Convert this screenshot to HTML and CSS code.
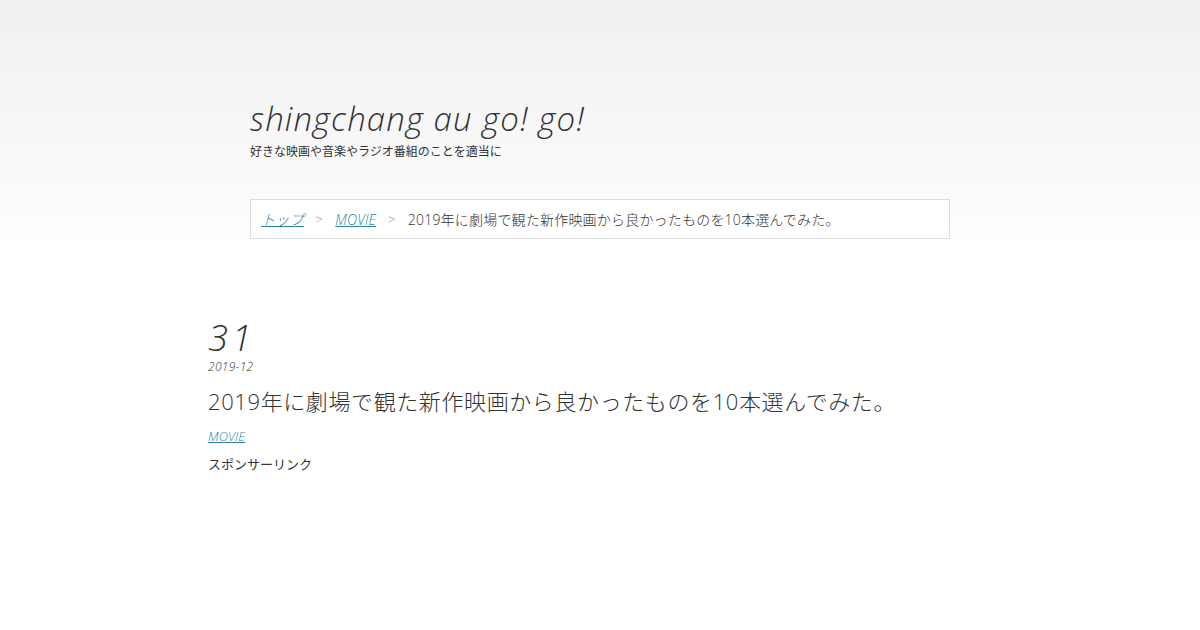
FILE: index.html
```html
<!DOCTYPE html>
<html lang="ja">
<head>
    <meta charset="UTF-8">
    <title>2019年に劇場で観た新作映画から良かったものを10本選んでみた。 - shingchang au go! go!</title>
    <link rel="stylesheet" href="styles.css">
</head>
<body>
    <!-- Site header -->
    <header class="site-header">
        <div class="header-inner">
            <h1 class="site-title">shingchang au go! go!</h1>
            <p class="site-desc">好きな映画や音楽やラジオ番組のことを適当に</p>

            <div class="breadcrumb">
                <a href="#">トップ</a>
                <span class="sep">&gt;</span>
                <a href="#">MOVIE</a>
                <span class="sep">&gt;</span>
                <span>2019年に劇場で観た新作映画から良かったものを10本選んでみた。</span>
            </div>
        </div>
    </header>

    <!-- Entry -->
    <main class="entry">
        <div class="entry-date">
            <div class="day">31</div>
            <div class="month">2019-12</div>
        </div>
        <h2 class="entry-title">2019年に劇場で観た新作映画から良かったものを10本選んでみた。</h2>
        <a class="entry-cat" href="#">MOVIE</a>
        <p class="sponsor">スポンサーリンク</p>
    </main>
</body>
</html>
```

FILE: styles.css
```css
/* Base */
body {
    margin: 0;
    background: #fff;
    color: #333;
    font-family: "Open Sans", "Noto Sans CJK JP", sans-serif;
}

a {
    color: #2d7f9f;
}

/* Header with soft grey fade */
.site-header {
    background: linear-gradient(to bottom, #f0f0f0 0px, #fbfbfb 200px, #ffffff 250px);
    padding-top: 98px;
    height: 172px;
}

.header-inner {
    width: 700px;
    margin: 0 auto;
}

.site-title {
    margin: 0;
    font-size: 33px;
    font-weight: 300;
    font-style: italic;
    color: #333;
    line-height: 42px;
    letter-spacing: 1.1px;
}

.site-desc {
    margin: 4px 0 0;
    font-size: 12px;
    line-height: 16px;
    color: #333;
}

/* Breadcrumb box */
.breadcrumb {
    margin-top: 39px;
    background: #fff;
    border: 1px solid #dcdcdc;
    height: 38px;
    padding: 0 10px;
    display: flex;
    align-items: center;
    gap: 10px;
    font-size: 14px;
    font-weight: 300;
    color: #333;
    letter-spacing: 0.2px;
}

.breadcrumb a {
    font-style: italic;
}

.breadcrumb .sep {
    color: #888;
    font-size: 13px;
    padding: 0 2px;
}

/* Entry */
.entry {
    width: 784px;
    margin: 50px auto 0;
}

.entry-date .day {
    font-size: 36px;
    font-weight: 300;
    font-style: italic;
    line-height: 36px;
    letter-spacing: 4px;
}

.entry-date .month {
    font-size: 12px;
    font-weight: 300;
    font-style: italic;
    line-height: 16px;
    margin-top: 3px;
    letter-spacing: 0.3px;
}

.entry-title {
    margin: 10px 0 0;
    font-size: 22px;
    font-weight: 300;
    line-height: 32px;
    letter-spacing: 0.6px;
}

.entry-cat {
    display: inline-block;
    margin-top: 10px;
    font-size: 13px;
    font-weight: 300;
    font-style: italic;
}

.sponsor {
    margin: 8px 0 0;
    font-size: 13px;
}
```
